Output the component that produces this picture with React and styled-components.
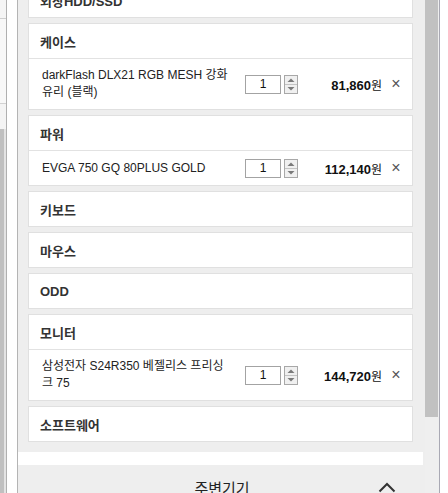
import React from "react";
import styled, { createGlobalStyle } from "styled-components";

const categories = [
  { id: "ssd", name: "외장HDD/SSD" },
  {
    id: "case",
    name: "케이스",
    item: { name: "darkFlash DLX21 RGB MESH 강화유리 (블랙)", qty: 1, price: "81,860" },
  },
  {
    id: "power",
    name: "파워",
    item: { name: "EVGA 750 GQ 80PLUS GOLD", qty: 1, price: "112,140" },
  },
  { id: "keyboard", name: "키보드" },
  { id: "mouse", name: "마우스" },
  { id: "odd", name: "ODD" },
  {
    id: "monitor",
    name: "모니터",
    item: { name: "삼성전자 S24R350 베젤리스 프리싱크 75", qty: 1, price: "144,720" },
  },
  { id: "software", name: "소프트웨어" },
];

const App = () => {
  return (
    <>
      <GlobalStyle />
      <Screen>
        <LeftRail>
          <RailPane>
            <RailTop />
            <RailMid />
            <RailGap />
            <RailThumb />
          </RailPane>
          <RailGutter />
        </LeftRail>
        <Main>
          <Scroller>
            <CardList>
              {categories.map((cat) => (
                <Card key={cat.id}>
                  <CardHeader>{cat.name}</CardHeader>
                  {cat.item && (
                    <ItemRow>
                      <ItemName>{cat.item.name}</ItemName>
                      <QtyBox>{cat.item.qty}</QtyBox>
                      <Spinner width="14" height="19" viewBox="0 0 14 19">
                        <rect x="0.5" y="0.5" width="13" height="18" fill="#f0f0f0" stroke="#a8a8a8" />
                        <line x1="1" y1="9.5" x2="13" y2="9.5" stroke="#c4c4c4" />
                        <path d="M3.5 7 L7 3.5 L10.5 7 Z" fill="#7a7a7a" />
                        <path d="M3.5 12 L7 15.5 L10.5 12 Z" fill="#7a7a7a" />
                      </Spinner>
                      <Price>
                        <b>{cat.item.price}</b>원
                      </Price>
                      <RemoveButton>×</RemoveButton>
                    </ItemRow>
                  )}
                </Card>
              ))}
            </CardList>
            <ListFoot />
            <SectionHeader>
              <span />
              <SectionTitle>주변기기</SectionTitle>
              <Caret width="18" height="11" viewBox="0 0 18 11">
                <polyline points="1.5,9.5 9,2 16.5,9.5" fill="none" stroke="#333" strokeWidth="2" />
              </Caret>
            </SectionHeader>
          </Scroller>
          <Scrollbar>
            <Thumb />
          </Scrollbar>
          <RightEdge />
        </Main>
      </Screen>
    </>
  );
};

export default App;

const GlobalStyle = createGlobalStyle`
  html, body {
    margin: 0;
    padding: 0;
    height: 100%;
    overflow: hidden;
    background: #fff;
  }
  body {
    font-family: "Liberation Sans", "Noto Sans CJK KR", sans-serif;
    color: #333;
  }
`;

const Screen = styled.div`
  display: flex;
  width: 448px;
  height: 493px;
  overflow: hidden;
`;

const LeftRail = styled.div`
  display: flex;
  flex: 0 0 18px;
`;

const RailPane = styled.div`
  display: flex;
  flex-direction: column;
  width: 6px;
  border-right: 1px solid #b0b0b0;
`;

const RailTop = styled.div`
  height: 18px;
  background: #f5f5f5;
  border-bottom: 1px solid #cfcfcf;
`;

const RailMid = styled.div`
  height: 84px;
  background: #f8f8f8;
  border-bottom: 1px solid #d2d2d2;
`;

const RailGap = styled.div`
  height: 25px;
  background: #f4f4f4;
`;

const RailThumb = styled.div`
  flex: 1;
  background: #c0c0c0;
  border-right: 2px solid #e4e4e4;
`;

const RailGutter = styled.div`
  width: 10px;
  background: #fff;
  border-right: 1px solid #b4b4b4;
`;

const Main = styled.div`
  display: flex;
  flex: 1;
  background: #eeeeee;
`;

const Scroller = styled.div`
  display: flex;
  flex-direction: column;
  width: 407px;
  flex: 0 0 407px;
  overflow: hidden;

  & > * {
    flex-shrink: 0;
  }
`;

const CardList = styled.div`
  display: flex;
  flex-direction: column;
  gap: 5px;
  margin-top: -18px;
  padding: 0 12px 0 10px;
`;

const Card = styled.section`
  background: #fff;
  border: 1px solid #e0e0e0;
`;

const CardHeader = styled.h3`
  display: flex;
  align-items: center;
  height: 34px;
  margin: 0;
  padding-left: 11px;
  font-size: 13px;
  font-weight: bold;
  color: #333;
`;

const ItemRow = styled.div`
  display: flex;
  align-items: center;
  min-height: 34px;
  padding: 0 10px 0 13px;
  border-top: 1px solid #e2e2e2;
`;

const ItemName = styled.div`
  flex: 0 0 203px;
  box-sizing: border-box;
  padding: 8px 14px 8px 0;
  font-size: 12px;
  line-height: 17px;
  color: #222;
`;

const QtyBox = styled.div`
  width: 36px;
  height: 19px;
  box-sizing: border-box;
  border: 1px solid #a3a3a3;
  font-size: 12px;
  line-height: 17px;
  text-align: center;
  color: #111;
`;

const Spinner = styled.svg`
  display: block;
  margin-left: 3px;
`;

const Price = styled.div`
  flex: 1;
  text-align: right;
  font-size: 12px;
  color: #111;

  b {
    font-size: 13px;
  }
`;

const RemoveButton = styled.span`
  width: 12px;
  margin-left: 8px;
  font-size: 16px;
  line-height: 16px;
  text-align: center;
  color: #555;
`;

const ListFoot = styled.div`
  height: 13px;
  margin: 10px 2px 0 0;
  background: #fff;
`;

const SectionHeader = styled.div`
  display: grid;
  grid-template-columns: 1fr auto 1fr;
  align-items: center;
  height: 44px;
  padding: 0 29px 0 30px;
`;

const SectionTitle = styled.span`
  font-size: 15px;
  color: #222;
`;

const Caret = styled.svg`
  justify-self: end;
  display: block;
`;

const Scrollbar = styled.div`
  flex: 0 0 14px;
  background: #efefef;
`;

const Thumb = styled.div`
  width: 13px;
  height: 417px;
  background: #c1c1c1;
`;

const RightEdge = styled.div`
  flex: 1;
  background: #fff;
  border-left: 1px solid #a9a9b4;
`;
